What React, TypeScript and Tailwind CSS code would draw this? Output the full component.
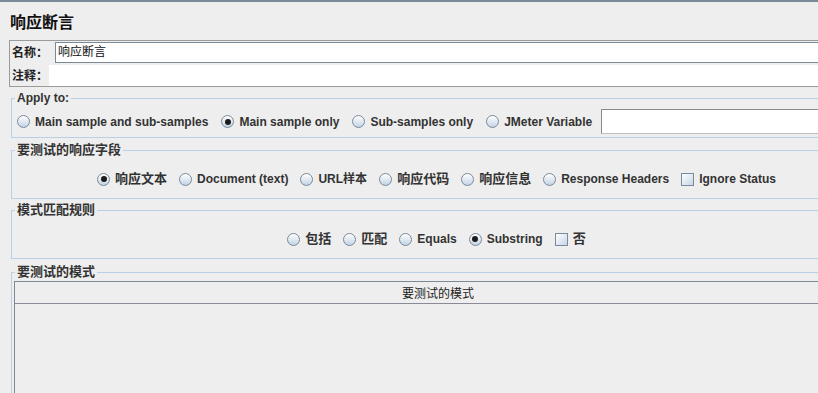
import React from 'react'

type Opt = { label: string; checked?: boolean; cjk?: boolean; box?: boolean }

const Radio = ({ checked }: { checked?: boolean }) => (
  <span className="flex h-[13px] w-[13px] shrink-0 items-center justify-center rounded-full border border-[#7a8a99] bg-linear-to-b from-white to-[#c3d3e5]">
    {checked && <span className="h-[6px] w-[6px] rounded-full bg-[#1c1c1c]" />}
  </span>
)

const Check = () => (
  <span className="h-[13px] w-[13px] shrink-0 border border-[#7a8a99] bg-linear-to-br from-white to-[#c6d6e8]" />
)

const Option = ({ opt }: { opt: Opt }) => (
  <label className="flex items-center gap-[5px]">
    {opt.box ? <Check /> : <Radio checked={opt.checked} />}
    <span className={`${opt.cjk ? 'text-[13px]' : 'text-[12px]'} font-bold text-[#333333] whitespace-nowrap`}>
      {opt.label}
    </span>
  </label>
)

const Group = ({
  title,
  cjk,
  className,
  children,
}: {
  title: string
  cjk?: boolean
  className?: string
  children: React.ReactNode
}) => (
  <fieldset className={`mx-[11px] border border-[#b8cfe5] ${className ?? ''}`}>
    <legend
      className={`ml-[3px] px-[2px] ${cjk ? 'text-[13px]' : 'text-[12px]'} font-bold leading-[14px] text-[#333333]`}
    >
      {title}
    </legend>
    {children}
  </fieldset>
)

const applyTo: Opt[] = [
  { label: 'Main sample and sub-samples' },
  { label: 'Main sample only', checked: true },
  { label: 'Sub-samples only' },
  { label: 'JMeter Variable' },
]

const fields: Opt[] = [
  { label: '响应文本', checked: true, cjk: true },
  { label: 'Document (text)' },
  { label: 'URL样本' },
  { label: '响应代码', cjk: true },
  { label: '响应信息', cjk: true },
  { label: 'Response Headers' },
  { label: 'Ignore Status', box: true },
]

const rules: Opt[] = [
  { label: '包括', cjk: true },
  { label: '匹配', cjk: true },
  { label: 'Equals' },
  { label: 'Substring', checked: true },
  { label: '否', cjk: true, box: true },
]

export default function App() {
  return (
    <div className="h-[393px] w-[818px] overflow-hidden bg-[#eeeeee] font-['Liberation_Sans','Noto_Sans_CJK_SC',sans-serif] text-[#222]">
      <div className="w-[873px]">
        <div className="h-[2px] bg-[#7a8a9a]" />
        <h1 className="ml-[10px] mt-[11px] text-[16px] font-bold leading-[20px] text-[#111]">响应断言</h1>

        {/* name / comment */}
        <div className="mx-[9px] mt-[7px] border border-[#9b9b9b]">
          <div className="flex h-[23px] items-center">
            <span className="w-[45px] pl-[2px] text-[12px] font-bold text-[#222]">名称：</span>
            <div className="h-[21px] flex-1 border border-[#7a8a99] bg-white pl-[2px] text-[12px] leading-[19px] text-[#111]">
              响应断言
            </div>
          </div>
          <div className="mt-[1px] flex h-[21px] items-center">
            <span className="w-[39px] pl-[2px] text-[12px] font-bold text-[#222]">注释：</span>
            <div className="h-full flex-1 bg-white" />
          </div>
        </div>

        <Group title="Apply to:" className="mt-[4px]">
          <div className="mt-[4px] mb-[3px] flex h-[25px] items-center gap-[13px] pl-[5px]">
            {applyTo.map((o) => (
              <Option key={o.label} opt={o} />
            ))}
            <div className="-ml-[4px] h-[25px] w-[260px] border border-[#8a8a8a] border-b-[#c0c0c0] border-r-[#c0c0c0] bg-white" />
          </div>
        </Group>

        <Group title="要测试的响应字段" cjk className="mt-[5px]">
          <div className="mt-[12px] mb-[9px] flex h-[20px] items-center justify-center gap-[12px]">
            {fields.map((o) => (
              <Option key={o.label} opt={o} />
            ))}
          </div>
        </Group>

        <Group title="模式匹配规则" cjk className="mt-[4px]">
          <div className="mt-[12px] mb-[9px] flex h-[20px] items-center justify-center gap-[12px]">
            {rules.map((o) => (
              <Option key={o.label} opt={o} />
            ))}
          </div>
        </Group>

        <Group title="要测试的模式" cjk className="mt-[6px]">
          <div className="ml-[2px] mt-[2px] border-l border-t border-[#7a8a99]">
            <div className="h-[22px] border-b border-[#8a8a99] pt-[2px] text-center text-[12px] leading-[20px] text-[#222]">
              要测试的模式
            </div>
            <div className="h-[120px]" />
          </div>
        </Group>
      </div>
    </div>
  )
}
